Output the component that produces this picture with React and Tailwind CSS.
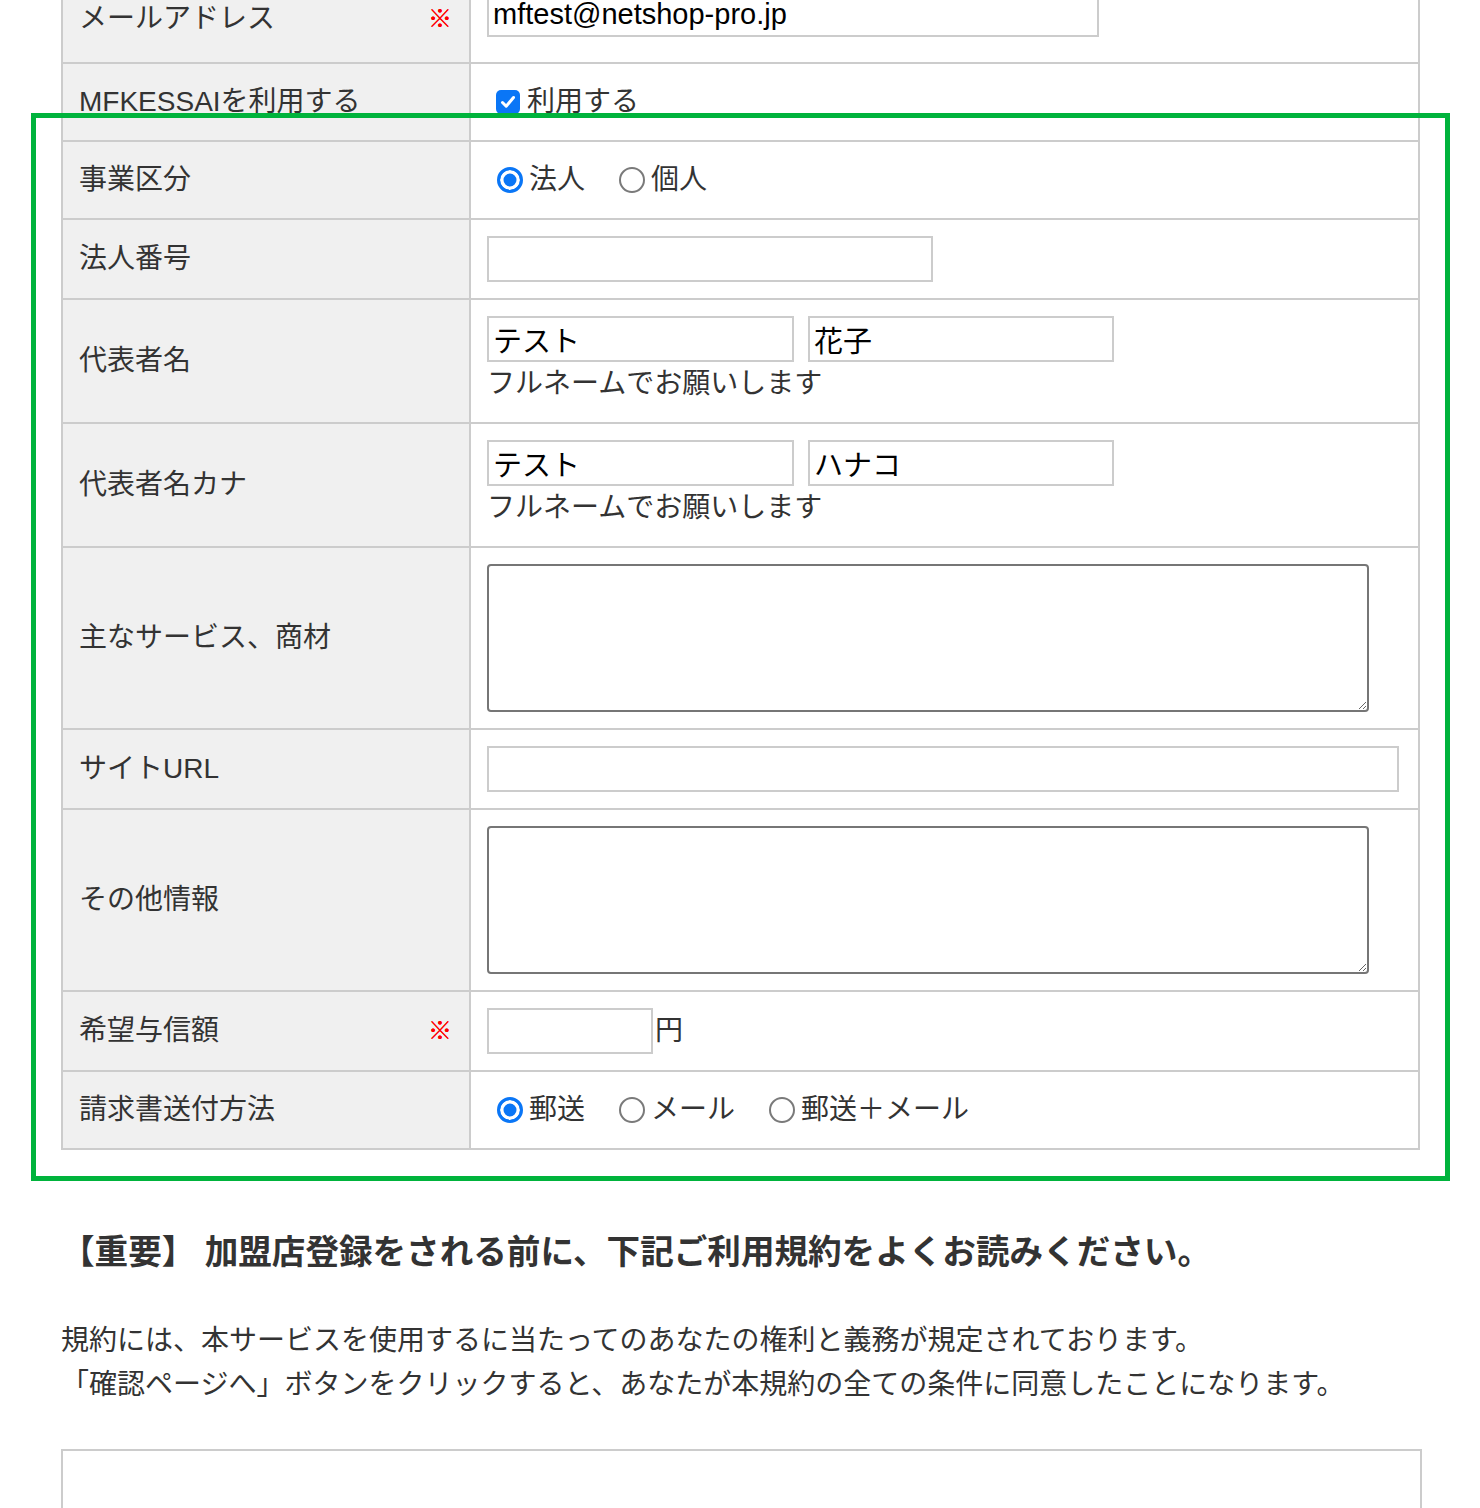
import React from "react";

const labelCls =
    "bg-[#f0f0f0] border-r-2 border-[#ccc] pl-[16px] pr-[17px] flex items-center justify-between";
const inputCls =
    "block h-[46px] border-2 border-[#ccc] px-[4px] text-[29px] text-black bg-white outline-none font-['Liberation_Sans','Noto_Sans_CJK_JP',sans-serif]";
const areaCls =
    "block w-[882px] h-[148px] border-2 border-[#767676] rounded-[4px] bg-white outline-none";
const radioCls =
    "appearance-none shrink-0 w-[26px] h-[26px] ml-[10px] mr-[6px] my-0 rounded-full border-2 border-[#7a7a7a] bg-white checked:border-[3px] checked:border-[#0a76f6] checked:bg-[#0a76f6] checked:shadow-[inset_0_0_0_3.5px_#fff]";

function Row({ label, required, children, cellClass, rowClass }) {
    return (
        <div className={"grid grid-cols-[408px_1fr] border-b-2 border-[#ccc] " + (rowClass || "")}>
            <div className={labelCls}>
                <span>{label}</span>
                {required && (
                    <span className="text-[#f00] text-[24px] leading-none font-bold [text-shadow:0_0_0.6px_#f00]">※</span>
                )}
            </div>
            <div className={"pl-[16px] " + (cellClass || "")}>{children}</div>
        </div>
    );
}

function Radio({ name, label, checked }) {
    return (
        <label className="flex items-center mr-[24px]">
            <input type="radio" name={name} defaultChecked={checked} className={radioCls} />
            <span>{label}</span>
        </label>
    );
}

export default function App() {
    return (
        <div className="relative w-[1480px] h-[1508px] overflow-hidden bg-white text-[#333] text-[28px] leading-[44px] font-['Liberation_Sans','Noto_Sans_CJK_JP',sans-serif]">
            <div className="pl-[61px]">
                {/* Form table */}
                <div className="w-[1359px] -mt-[25px] border-x-2 border-[#ccc]">
                    <Row label="メールアドレス" required rowClass="h-[89px]" cellClass="pt-[16px]">
                        <input className={inputCls + " w-[612px]"} defaultValue="mftest@netshop-pro.jp" />
                    </Row>

                    <Row label="MFKESSAIを利用する" rowClass="h-[78px]" cellClass="flex items-center">
                        <label className="flex items-center">
                            <span className="w-[24px] h-[24px] ml-[9px] mr-[7px] rounded-[5px] bg-[#0a76f6] flex items-center justify-center">
                                <svg width="18" height="18" viewBox="0 0 18 18" fill="none">
                                    <path d="M3.5 9.5 L7.2 13.2 L14.5 4.5" stroke="#fff" strokeWidth="3" strokeLinecap="round" strokeLinejoin="round" />
                                </svg>
                            </span>
                            <span>利用する</span>
                        </label>
                    </Row>

                    <Row label="事業区分" rowClass="h-[78px]" cellClass="flex items-center">
                        <Radio name="kubun" label="法人" checked />
                        <Radio name="kubun" label="個人" />
                    </Row>

                    <Row label="法人番号" cellClass="py-[16px]">
                        <input className={inputCls + " w-[446px]"} />
                    </Row>

                    <Row label="代表者名" cellClass="pt-[16px] pb-[16px]">
                        <div className="flex gap-[14px]">
                            <input className={inputCls + " w-[307px]"} defaultValue="テスト" />
                            <input className={inputCls + " w-[306px]"} defaultValue="花子" />
                        </div>
                        <p>フルネームでお願いします</p>
                    </Row>

                    <Row label="代表者名カナ" cellClass="pt-[16px] pb-[16px]">
                        <div className="flex gap-[14px]">
                            <input className={inputCls + " w-[307px]"} defaultValue="テスト" />
                            <input className={inputCls + " w-[306px]"} defaultValue="ハナコ" />
                        </div>
                        <p>フルネームでお願いします</p>
                    </Row>

                    <Row label="主なサービス、商材" cellClass="py-[16px]">
                        <textarea className={areaCls} />
                    </Row>

                    <Row label="サイトURL" cellClass="py-[16px]">
                        <input className={inputCls + " w-[912px]"} />
                    </Row>

                    <Row label="その他情報" cellClass="py-[16px]">
                        <textarea className={areaCls} />
                    </Row>

                    <Row label="希望与信額" required cellClass="py-[16px] flex items-center">
                        <input className={inputCls + " w-[166px]"} />
                        <span className="ml-[2px]">円</span>
                    </Row>

                    <Row label="請求書送付方法" rowClass="h-[78px]" cellClass="flex items-center">
                        <Radio name="seikyu" label="郵送" checked />
                        <Radio name="seikyu" label="メール" />
                        <Radio name="seikyu" label="郵送＋メール" />
                    </Row>
                </div>

                {/* Terms */}
                <h2 className="mt-[79px] text-[33.6px] leading-[48px] font-bold text-[#333]">
                    【重要】 加盟店登録をされる前に、下記ご利用規約をよくお読みください。
                </h2>
                <p className="mt-[42px] text-[28px] leading-[44px]">
                    規約には、本サービスを使用するに当たってのあなたの権利と義務が規定されております。
                    <br />
                    「確認ページへ」ボタンをクリックすると、あなたが本規約の全ての条件に同意したことになります。
                </p>
                <div className="mt-[42px] w-[1361px] h-[200px] border-2 border-[#ccc]"></div>
            </div>

            {/* highlight frame */}
            <div className="absolute left-[31px] top-[113px] w-[1419px] h-[1068px] border-[5px] border-[#00b33c] pointer-events-none"></div>
        </div>
    );
}
